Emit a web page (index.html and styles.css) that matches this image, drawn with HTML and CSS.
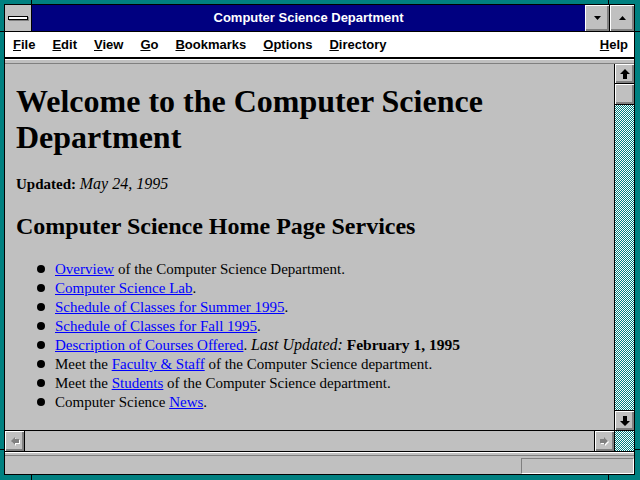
FILE: index.html
```html
<!DOCTYPE html>
<html lang="en">
<head>
    <meta charset="UTF-8">
    <title>Computer Science Department</title>
    <link rel="stylesheet" href="styles.css">
</head>
<body>
    <div class="window">
        <div class="titlebar">
            <div class="sysmenu"><span class="sysbar"></span></div>
            <div class="caption">Computer Science Department</div>
            <div class="tbtn">
                <svg width="7" height="4" viewBox="0 0 7 4"><polygon points="0,0 7,0 3.5,4" fill="#000"/></svg>
            </div>
            <div class="tbtn last">
                <svg width="7" height="4" viewBox="0 0 7 4"><polygon points="0,4 7,4 3.5,0" fill="#000"/></svg>
            </div>
        </div>

        <div class="menubar">
            <span><u>F</u>ile</span>
            <span><u>E</u>dit</span>
            <span><u>V</u>iew</span>
            <span><u>G</u>o</span>
            <span><u>B</u>ookmarks</span>
            <span><u>O</u>ptions</span>
            <span><u>D</u>irectory</span>
            <span class="help"><u>H</u>elp</span>
        </div>
        <div class="strip top"></div>

        <div class="main">
            <div class="page">
                <h1>Welcome to the Computer Science Department</h1>
                <p class="updated"><b>Updated:</b> <i>May 24, 1995</i></p>
                <h2>Computer Science Home Page Services</h2>
                <ul>
                    <li><a href="#">Overview</a> of the Computer Science Department.</li>
                    <li><a href="#">Computer Science Lab</a>.</li>
                    <li><a href="#">Schedule of Classes for Summer 1995</a>.</li>
                    <li><a href="#">Schedule of Classes for Fall 1995</a>.</li>
                    <li><a href="#">Description of Courses Offered</a>. <i>Last Updated:</i> <b>February 1, 1995</b></li>
                    <li>Meet the <a href="#">Faculty &amp; Staff</a> of the Computer Science department.</li>
                    <li>Meet the <a href="#">Students</a> of the Computer Science department.</li>
                    <li>Computer Science <a href="#">News</a>.</li>
                </ul>
            </div>
            <div class="vscroll">
                <div class="sbtn">
                    <svg width="10" height="10" viewBox="0 0 10 10"><polygon points="0,5 5,0 10,5 7,5 7,10 3,10 3,5" fill="#000"/></svg>
                </div>
                <div class="thumb"></div>
                <div class="track"></div>
                <div class="sbtn down">
                    <svg width="10" height="10" viewBox="0 0 10 10"><polygon points="0,5 5,10 10,5 7,5 7,0 3,0 3,5" fill="#000"/></svg>
                </div>
            </div>
        </div>

        <div class="hscroll">
            <div class="sbtn left">
                <svg width="10" height="10" viewBox="0 0 10 10">
                    <polygon points="5,1 1,5 5,9 5,7 9,7 9,3 5,3" fill="#fff" transform="translate(1,1)"/>
                    <polygon points="5,1 1,5 5,9 5,7 9,7 9,3 5,3" fill="#808080"/>
                </svg>
            </div>
            <div class="htrack"></div>
            <div class="sbtn right">
                <svg width="10" height="10" viewBox="0 0 10 10">
                    <polygon points="4,1 8,5 4,9 4,7 0,7 0,3 4,3" fill="#fff" transform="translate(1,1)"/>
                    <polygon points="4,1 8,5 4,9 4,7 0,7 0,3 4,3" fill="#808080"/>
                </svg>
            </div>
            <div class="corner"></div>
        </div>
        <div class="strip low"></div>

        <div class="status">
            <div class="status-box"></div>
        </div>
    </div>
</body>
</html>
```

FILE: styles.css
```css
html, body {
    margin: 0;
    height: 480px;
    overflow: hidden;
}
body {
    font-family: "Liberation Serif", "Times New Roman", serif;
    background:
        linear-gradient(#000, #000) 31px 0 / 1px 4px no-repeat,
        linear-gradient(#000, #000) 608px 0 / 1px 4px no-repeat,
        linear-gradient(#000, #000) 31px 475px / 1px 5px no-repeat,
        linear-gradient(#000, #000) 608px 475px / 1px 5px no-repeat,
        linear-gradient(#000, #000) 0 31px / 4px 1px no-repeat,
        linear-gradient(#000, #000) 0 449px / 4px 1px no-repeat,
        linear-gradient(#000, #000) 635px 31px / 5px 1px no-repeat,
        linear-gradient(#000, #000) 635px 449px / 5px 1px no-repeat,
        #008080;
}
.window {
    margin: 4px 0 0 4px;
    width: 629px;
    height: 469px;
    border: 1px solid #000;
    background-color: #c0c0c0;
    display: flex;
    flex-direction: column;
}

/* title bar */
.titlebar {
    height: 26px;
    border-bottom: 1px solid #000;
    background-color: #000080;
    display: flex;
    flex-shrink: 0;
}
.sysmenu {
    width: 26px;
    border-right: 1px solid #000;
    background-color: #c0c0c0;
    display: flex;
    align-items: center;
    justify-content: center;
}
.sysbar {
    width: 18px;
    height: 2px;
    background-color: #fff;
    border: 1px solid #000;
    box-shadow: 1px 1px #808080;
}
.caption {
    flex: 1;
    color: #fff;
    text-align: center;
    font: bold 13px/26px "Liberation Sans", Arial, sans-serif;
}
.tbtn {
    width: 24px;
    background-color: #c0c0c0;
    box-shadow: inset 1px 1px #fff, inset -1px -1px #808080, inset -2px -2px #808080;
    display: flex;
    align-items: center;
    justify-content: center;
}
.tbtn.last {
    border-left: 1px solid #000;
}

/* menu */
.menubar {
    height: 25px;
    background-color: #fff;
    display: flex;
    align-items: center;
    flex-shrink: 0;
    font: bold 13px "Liberation Sans", Arial, sans-serif;
}
.menubar span {
    padding: 0 8.5px;
}
.menubar span:first-child {
    padding-left: 8px;
}
.menubar .help {
    margin-left: auto;
    padding-right: 6px;
}
.strip {
    flex-shrink: 0;
    box-shadow: inset 0 1px #fff;
    border-bottom: 1px solid #808080;
}
.strip.top {
    height: 4px;
    border-top: 2px solid #000;
}
.strip.low {
    height: 3px;
}

/* page area */
.main {
    height: 366px;
    display: flex;
    flex-shrink: 0;
}
.page {
    flex: 1;
    padding: 0 11px;
    overflow: hidden;
    color: #000;
}
.page h1 {
    font-size: 32px;
    line-height: 36px;
    margin: 19px 0 20px;
}
.page .updated {
    font-size: 15px;
    line-height: 19px;
    margin: 0 0 18px;
}
.page h2 {
    font-size: 24px;
    line-height: 28px;
    margin: 0 0 20px;
}
.page ul {
    margin: 0;
    padding-left: 39px;
    list-style: none;
    font-size: 15px;
    line-height: 19px;
}
.page i {
    font-size: 16px;
    line-height: 15px;
}
.page li b {
    font-size: 15.5px;
    line-height: 15px;
}
.page li::before {
    content: "";
    display: inline-block;
    width: 8px;
    height: 8px;
    border-radius: 50%;
    background-color: #000;
    margin-left: -18px;
    margin-right: 10px;
    vertical-align: 1px;
}
.page a {
    color: #0000ff;
}

/* scrollbars */
.sbtn {
    height: 19px;
    background-color: #c0c0c0;
    box-shadow: inset 1px 1px #fff, inset -1px -1px #808080, inset -2px -2px #808080;
    display: flex;
    align-items: center;
    justify-content: center;
    flex-shrink: 0;
}
.vscroll {
    width: 19px;
    border-left: 1px solid #000;
    display: flex;
    flex-direction: column;
}
.vscroll .sbtn {
    border-bottom: 1px solid #000;
}
.vscroll .sbtn.down {
    border-bottom: none;
    border-top: 1px solid #000;
}
.thumb {
    height: 20px;
    border-bottom: 1px solid #000;
    background-color: #c0c0c0;
    box-shadow: inset 1px 1px #fff, inset -1px -1px #808080, inset -2px -2px #808080;
    flex-shrink: 0;
}
.track, .corner {
    background: repeating-conic-gradient(#008080 0 25%, #fff 0 50%) 0 0 / 2px 2px;
}
.track {
    flex: 1;
}
.hscroll {
    height: 20px;
    border-top: 1px solid #000;
    border-bottom: 1px solid #000;
    display: flex;
    flex-shrink: 0;
}
.hscroll .sbtn {
    width: 19px;
    height: 20px;
}
.hscroll .left {
    border-right: 1px solid #000;
}
.hscroll .right {
    border-left: 1px solid #000;
}
.htrack {
    flex: 1;
}
.corner {
    width: 19px;
    border-left: 1px solid #000;
}

/* status bar */
.status {
    height: 16px;
    padding-top: 2px;
    display: flex;
    justify-content: flex-end;
    flex-shrink: 0;
}
.status-box {
    width: 111px;
    height: 14px;
    border: 1px solid;
    border-color: #808080 #fff #fff #808080;
}
```
